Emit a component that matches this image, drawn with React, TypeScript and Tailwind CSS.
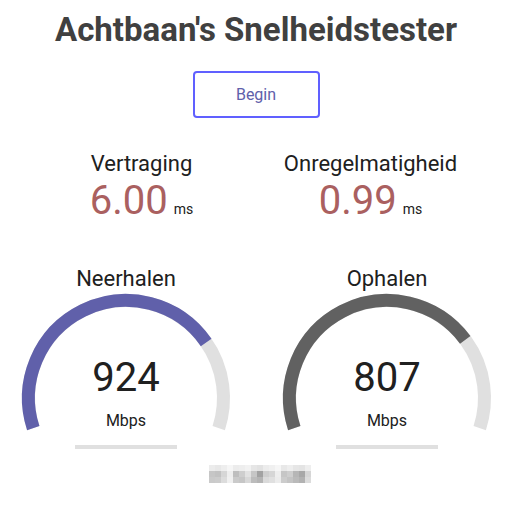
import React from 'react';

const CX = 126;
const CY = 132;
const R = 97.5;

const pt = (deg: number) => {
  const a = (deg * Math.PI) / 180;
  return `${(CX + R * Math.cos(a)).toFixed(2)} ${(CY + R * Math.sin(a)).toFixed(2)}`;
};

// same sweep as the canvas version: -1.1PI .. 0.1PI
const arcPath = (amount: number) => {
  const start = -198;
  const end = start + 216 * amount;
  const large = end - start > 180 ? 1 : 0;
  return `M ${pt(start)} A ${R} ${R} 0 ${large} 1 ${pt(end)}`;
};

const blur = [
  ['#ececec', '#e8e8e8', '#eeeeee', '#f6f6f6', '#ececec', '#eeeeee', '#f2f2f2', '#e6e6e6', '#e2e2e2', '#ececec', '#f0f0f0', '#f6f6f6', '#e8e8e8', '#eeeeee', '#e6e6e6', '#e4e4e4', '#eeeeee'],
  ['#c6c6c6', '#c2c2c2', '#d6d6d6', '#eeeeee', '#bebebe', '#cecece', '#e2e2e2', '#c6c6c6', '#a2a2a2', '#cecece', '#d6d6d6', '#eeeeee', '#c6c6c6', '#cecece', '#b6b6b6', '#a8a8a8', '#d6d6d6'],
  ['#cacaca', '#cccccc', '#dcdcdc', '#f0f0f0', '#cacaca', '#c6c6c6', '#d8d8d8', '#bcbcbc', '#b4b4b4', '#dadada', '#e0e0e0', '#ececec', '#cccccc', '#c4c4c4', '#bababa', '#b2b2b2', '#dcdcdc'],
];

const Small = ({ name, value }: { name: string; value: string }) => (
  <div className="w-[224px] flex flex-col items-center">
    <div className="text-[22px] leading-[24px] text-[#202020]">{name}</div>
    <div className="mt-[3px] flex items-baseline">
      <span className="text-[40px] leading-[44px] text-[#aa6060]">{value}</span>
      <span className="ml-[6px] text-[14px] text-[#202020]">ms</span>
    </div>
  </div>
);

const Gauge = ({
  name,
  value,
  amount,
  color,
}: {
  name: string;
  value: string;
  amount: number;
  color: string;
}) => (
  <div className="relative w-[252px] flex flex-col items-center">
    <svg className="absolute left-0 top-0" width="252" height="200" viewBox="0 0 252 200">
      <path d={arcPath(1)} fill="none" stroke="#e0e0e0" strokeWidth="13" />
      <path d={arcPath(amount)} fill="none" stroke={color} strokeWidth="13" />
    </svg>
    <div className="relative mt-[0.5px] text-[22px] leading-[24px] text-[#202020]">{name}</div>
    <div className="relative mt-[65px] text-[40px] leading-[44px] text-[#202020]">{value}</div>
    <div className="relative mt-[11px] text-[16px] leading-[20px] text-[#202020]">Mbps</div>
    <div className="relative mt-[14px] w-[102px] h-[4px] bg-[#e0e0e0]" />
  </div>
);

export default function App() {
  return (
    <div className="w-[526px] h-[521px] bg-white font-['Roboto',sans-serif]">
      <div className="w-[512px] flex flex-col items-center">
        <h1 className="mt-[11px] text-[33px] leading-[38px] font-bold text-[#404040]">
          Achtbaan's Snelheidstester
        </h1>
        <button className="mt-[22px] w-[127px] h-[47px] flex items-center justify-center border-2 border-[#6060ff] rounded-[4px] text-[16px] text-[#6060aa] bg-white">
          Begin
        </button>
        <div className="mt-[34px] flex gap-[5px]">
          <Small name="Vertraging" value="6.00" />
          <Small name="Onregelmatigheid" value="0.99" />
        </div>
      </div>
      <div className="mt-[43px] flex gap-[9px]">
        <Gauge name="Neerhalen" value="924" amount={0.756} color="#6060aa" />
        <Gauge name="Ophalen" value="807" amount={0.747} color="#616161" />
      </div>
      <div className="w-[512px] mt-[16px] flex justify-center pl-[8px]">
        <div className="flex flex-col">
          {blur.map((row, i) => (
            <div key={i} className="flex">
              {row.map((c, j) => (
                <div key={j} className="w-[6px] h-[6px]" style={{ backgroundColor: c }} />
              ))}
            </div>
          ))}
        </div>
      </div>
    </div>
  );
}
